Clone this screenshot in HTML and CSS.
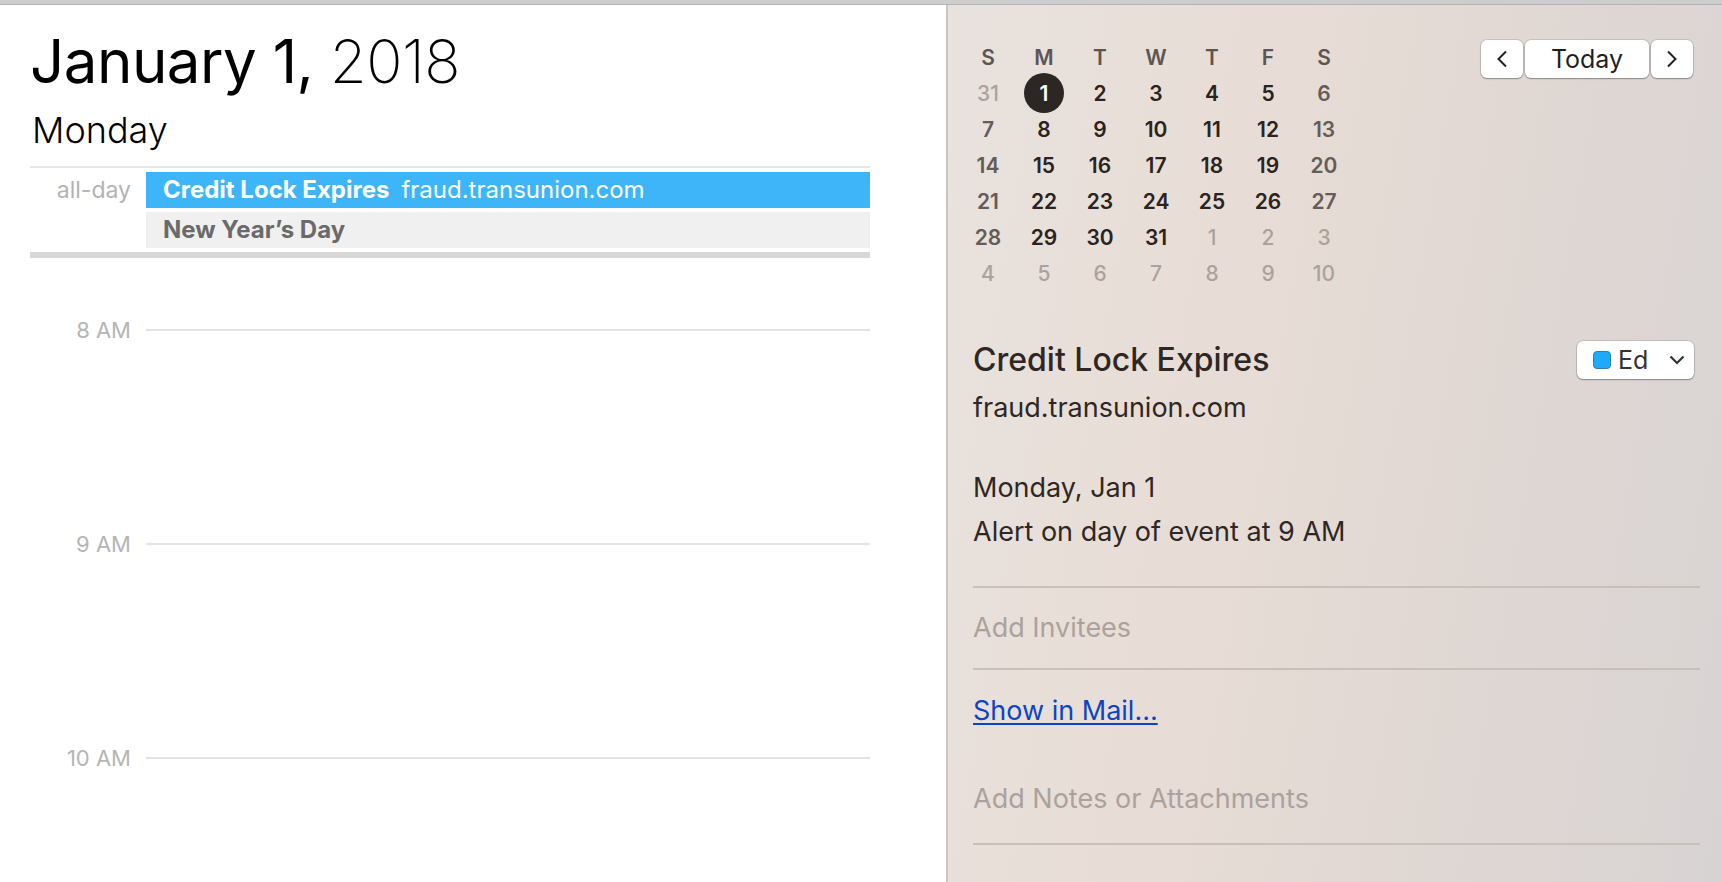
FILE: index.html
```html
<!DOCTYPE html>
<html>
<head>
<meta charset="utf-8">
<link rel="stylesheet" href="styles.css">
</head>
<body>
<div class="topbar"></div>
<div class="app">
  <section class="day-pane">
    <h1 class="date"><span class="md">January 1,</span> <span class="yr">2018</span></h1>
    <div class="weekday">Monday</div>
    <div class="allday">
      <div class="allday-label">all-day</div>
      <div class="allday-events">
        <div class="ev ev-blue"><span class="ev-title">Credit Lock Expires</span><span class="ev-loc">fraud.transunion.com</span></div>
        <div class="ev ev-gray"><span class="ev-title">New Year’s Day</span></div>
      </div>
    </div>
    <div class="hours">
      <div class="hour"><div class="hour-label">8 AM</div><div class="hour-line"></div></div>
      <div class="hour"><div class="hour-label">9 AM</div><div class="hour-line"></div></div>
      <div class="hour"><div class="hour-label">10 AM</div><div class="hour-line"></div></div>
    </div>
  </section>
  <aside class="side">
    <div class="side-top">
      <div class="minical">
        <div class="h">S</div><div class="h">M</div><div class="h">T</div><div class="h">W</div><div class="h">T</div><div class="h">F</div><div class="h">S</div>
        <div class="o">31</div><div class="d"><span class="today">1</span></div><div class="d">2</div><div class="d">3</div><div class="d">4</div><div class="d">5</div><div class="w">6</div>
        <div class="w">7</div><div class="d">8</div><div class="d">9</div><div class="d">10</div><div class="d">11</div><div class="d">12</div><div class="w">13</div>
        <div class="w">14</div><div class="d">15</div><div class="d">16</div><div class="d">17</div><div class="d">18</div><div class="d">19</div><div class="w">20</div>
        <div class="w">21</div><div class="d">22</div><div class="d">23</div><div class="d">24</div><div class="d">25</div><div class="d">26</div><div class="w">27</div>
        <div class="w">28</div><div class="d">29</div><div class="d">30</div><div class="d">31</div><div class="o">1</div><div class="o">2</div><div class="o">3</div>
        <div class="o">4</div><div class="o">5</div><div class="o">6</div><div class="o">7</div><div class="o">8</div><div class="o">9</div><div class="o">10</div>
      </div>
      <div class="nav">
        <button class="btn btn-arrow"><svg width="12" height="18" viewBox="0 0 12 18"><polyline points="10,1.5 2.5,9 10,16.5" fill="none" stroke="#222" stroke-width="2"/></svg></button>
        <button class="btn btn-today">Today</button>
        <button class="btn btn-arrow"><svg width="12" height="18" viewBox="0 0 12 18"><polyline points="2,1.5 9.5,9 2,16.5" fill="none" stroke="#222" stroke-width="2"/></svg></button>
      </div>
    </div>
    <div class="details">
      <div class="title-row">
        <div class="ev-name">Credit Lock Expires</div>
        <div class="cal-select">
          <span class="swatch"></span><span class="cal-name">Ed</span>
          <svg class="chev" width="16" height="10" viewBox="0 0 16 10"><polyline points="1.5,1.5 8,8 14.5,1.5" fill="none" stroke="#333" stroke-width="2.2"/></svg>
        </div>
      </div>
      <div class="ev-url">fraud.transunion.com</div>
      <div class="ev-when">
        <div>Monday, Jan 1</div>
        <div>Alert on day of event at 9 AM</div>
      </div>
      <div class="field invitees">Add Invitees</div>
      <div class="mail-row"><a class="mail-link" href="#">Show in Mail…</a></div>
      <div class="field notes">Add Notes or Attachments</div>
    </div>
  </aside>
</div>
</body>
</html>
```
FILE: styles.css
```css
* { box-sizing: border-box; }
html, body { margin: 0; padding: 0; }
body {
  width: 1722px;
  height: 882px;
  overflow: hidden;
  font-family: Inter, "Liberation Sans", sans-serif;
  background: #fff;
}
.topbar {
  height: 5px;
  background: #cdcdcd;
  border-bottom: 1px solid #b3b3b3;
}
.app {
  display: flex;
  height: 877px;
  overflow: hidden;
}
.day-pane {
  width: 946px;
  flex: none;
  background: #fff;
  padding: 20px 76px 0 30px;
  overflow: hidden;
}
.date {
  margin: 0;
  font-size: 60px;
  line-height: 72px;
  font-weight: 400;
  color: #000;
  letter-spacing: -0.5px;
  white-space: nowrap;
}
.date .yr { font-weight: 200; }
.weekday {
  margin-top: 11px;
  font-size: 36px;
  line-height: 44px;
  font-weight: 300;
  color: #000;
  margin-left: 2px;
}
.allday {
  margin-top: 14px;
  display: flex;
  gap: 15px;
  border-top: 2px solid #e6e6e6;
  border-bottom: 6px solid #d8d8d8;
  padding: 4px 0;
}
.allday-label {
  width: 101px;
  flex: none;
  text-align: right;
  font-size: 23px;
  line-height: 36px;
  color: #b3b3b3;
}
.allday-events {
  flex: 1;
  display: flex;
  flex-direction: column;
  gap: 4px;
}
.ev {
  height: 36px;
  line-height: 36px;
  font-size: 24px;
  padding-left: 17px;
  white-space: nowrap;
}
.ev-title { font-weight: 700; margin-right: 12px; }
.ev-blue { background: #3eb5f9; color: #fff; }
.ev-gray { background: #f0f0f0; color: #6a6a6a; }
.hours { margin-top: 71px; }
.hour {
  display: flex;
  gap: 15px;
  height: 214px;
}
.hour:last-child { height: 120px; }
.hour-label {
  width: 101px;
  flex: none;
  text-align: right;
  font-size: 22px;
  line-height: 26px;
  margin-top: -12px;
  height: 26px;
  color: #b5b5b5;
}
.hour-line {
  flex: 1;
  border-top: 2px solid #e4e4e4;
}
.side {
  flex: 1;
  border-left: 2px solid #c9c5c3;
  background: linear-gradient(100deg, #e8e2de 0%, #e8ddd6 35%, #dfd7d3 70%, #d8d3d3 100%);
  padding: 34px 22px 0 25px;
}
.side-top {
  display: flex;
  justify-content: space-between;
  align-items: flex-start;
}
.minical {
  margin-left: -13px;
  display: grid;
  grid-template-columns: repeat(7, 56px);
  grid-auto-rows: 36px;
  font-size: 21px;
  font-weight: 600;
}
.minical > div {
  display: flex;
  align-items: center;
  justify-content: center;
}
.minical .h { color: #5d5551; }
.minical .d { color: #2a2320; }
.minical .w { color: #645c58; }
.minical .o { color: #aaa29e; font-weight: 500; }
.minical .today {
  flex: none;
  width: 40px;
  height: 40px;
  border-radius: 50%;
  background: #2c2624;
  color: #fff;
  display: flex;
  align-items: center;
  justify-content: center;
}
.nav {
  display: flex;
  gap: 2px;
  margin-top: 1px;
  margin-right: 7px;
}
.btn {
  height: 38px;
  background: #fff;
  border: none;
  border-radius: 6px;
  box-shadow: 0 0 0 1px rgba(0,0,0,0.10), 0 1px 1.5px rgba(0,0,0,0.30);
  font-family: Inter, "Liberation Sans", sans-serif;
  color: #1f1f1f;
  padding: 0;
  display: flex;
  align-items: center;
  justify-content: center;
}
.btn-arrow { width: 42px; }
.btn-today { width: 124px; font-size: 25px; }
.title-row {
  margin-top: 49px;
  display: flex;
  justify-content: space-between;
  align-items: center;
  height: 40px;
}
.ev-name {
  font-size: 32px;
  line-height: 40px;
  font-weight: 500;
  color: #2e2724;
}
.cal-select {
  width: 117px;
  height: 38px;
  margin-right: 6px;
  background: #fff;
  border-radius: 6px;
  box-shadow: 0 0 0 1px rgba(0,0,0,0.10), 0 1px 1.5px rgba(0,0,0,0.30);
  display: flex;
  align-items: center;
  padding-left: 16px;
}
.swatch {
  width: 18px;
  height: 18px;
  border-radius: 4px;
  background: #1eaaf7;
  border: 1.5px solid #2f7bbd;
}
.cal-name {
  margin-left: 7px;
  font-size: 25px;
  color: #333;
}
.chev { margin-left: auto; margin-right: 9px; }
.ev-url {
  margin-top: 12px;
  font-size: 27px;
  line-height: 32px;
  color: #2e2724;
}
.ev-when {
  margin-top: 42px;
  font-size: 27px;
  line-height: 44px;
  color: #2e2724;
  padding-bottom: 32px;
  border-bottom: 2px solid #c8c0bb;
}
.field {
  font-size: 27px;
  color: #aba29d;
}
.invitees {
  line-height: 80px;
  border-bottom: 2px solid #c8c0bb;
}
.mail-row {
  padding-top: 1px;
  line-height: 80px;
  font-size: 27px;
}
.mail-link {
  color: #0b45c4;
  text-decoration: underline;
  text-underline-offset: 3px;
}
.notes {
  margin-top: 4px;
  line-height: 88px;
  border-bottom: 2px solid #c8c0bb;
}
```
